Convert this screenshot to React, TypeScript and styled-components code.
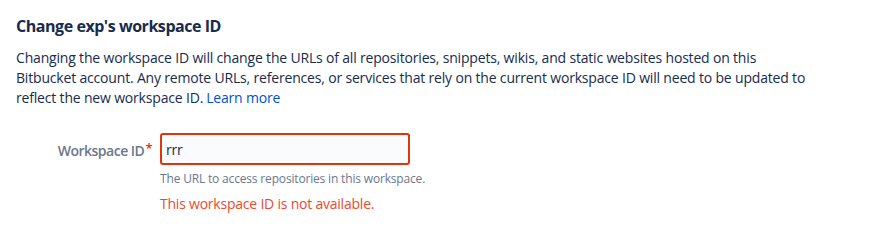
import React from "react";
import styled, { createGlobalStyle } from "styled-components";

const Global = createGlobalStyle`
  html, body { margin: 0; padding: 0; background: #fff; }
  body {
    font-family: "Open Sans", "Noto Sans", sans-serif;
    color: #172B4D;
    -webkit-font-smoothing: antialiased;
  }
`;

const Page = styled.main`
  padding: 16px 16px 0 16px;
`;

const Title = styled.h2`
  margin: 0;
  font-size: 16px;
  line-height: 20px;
  font-weight: 700;
  letter-spacing: -0.45px;
  color: #172B4D;
`;

const Description = styled.p`
  margin: 12px 0 0 0;
  max-width: 796px;
  font-size: 14px;
  line-height: 20px;
  letter-spacing: -0.18px;
  color: #172B4D;
`;

const Link = styled.a`
  color: #0052CC;
  text-decoration: none;
  margin-left: 3px;
`;

const FieldRow = styled.div`
  margin-top: 25px;
  display: grid;
  grid-template-columns: 136px 250px;
  column-gap: 8px;
  align-items: start;
`;

const Label = styled.label`
  grid-column: 1;
  justify-self: end;
  padding-top: 5px;
  font-size: 14px;
  line-height: 20px;
  font-weight: 600;
  letter-spacing: -0.5px;
  color: #6B778C;
`;

const Required = styled.span`
  color: #DE350B;
  margin-left: 1px;
  vertical-align: 3px;
  font-size: 13px;
`;

const FieldBody = styled.div`
  grid-column: 2;
  display: flex;
  flex-direction: column;
`;

const Input = styled.input`
  box-sizing: border-box;
  width: 250px;
  height: 32px;
  margin: 0;
  padding: 0 4px;
  border: 2px solid #DE350B;
  border-radius: 3px;
  background: #FAFBFC;
  font-family: inherit;
  font-size: 14px;
  letter-spacing: -0.18px;
  color: #172B4D;
  outline: none;
`;

const Helper = styled.div`
  margin-top: 6px;
  font-size: 12px;
  line-height: 16px;
  letter-spacing: -0.17px;
  color: #6B778C;
  white-space: nowrap;
`;

const ErrorText = styled.div`
  margin-top: 7px;
  font-size: 14px;
  line-height: 20px;
  letter-spacing: -0.22px;
  color: #EB4A2C;
  white-space: nowrap;
`;

export default function App() {
  return (
    <>
      <Global />
      <Page>
        <Title>Change exp's workspace ID</Title>
        <Description>
          Changing the workspace ID will change the URLs of all repositories, snippets, wikis, and static
          websites hosted on this Bitbucket account. Any remote URLs, references, or services that rely on
          the current workspace ID will need to be updated to reflect the new workspace ID.
          <Link href="#">Learn more</Link>
        </Description>
        <FieldRow>
          <Label htmlFor="ws-id">
            Workspace ID<Required>*</Required>
          </Label>
          <FieldBody>
            <Input id="ws-id" defaultValue="rrr" />
            <Helper>The URL to access repositories in this workspace.</Helper>
            <ErrorText>This workspace ID is not available.</ErrorText>
          </FieldBody>
        </FieldRow>
      </Page>
    </>
  );
}
